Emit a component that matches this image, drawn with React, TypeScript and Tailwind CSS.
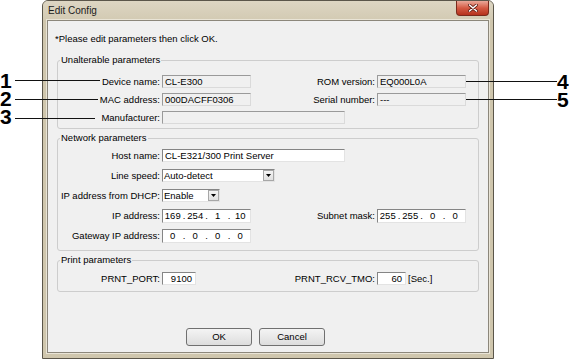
import React from 'react';

// sunken edit boxes: dark top/left, light bottom/right
const boxOff = 'border border-t-[#9a9a9a] border-l-[#9a9a9a] border-b-[#dadada] border-r-[#dadada] bg-[#f0f0f0]';
const boxOn  = 'border border-t-[#858585] border-l-[#858585] border-b-[#e3e3e3] border-r-[#e3e3e3] bg-white';

const Label: React.FC<{ children: React.ReactNode }> = ({ children }) => (
  <div className="text-right pr-[2px] whitespace-nowrap leading-[13px]">{children}</div>
);

const Field: React.FC<{ value?: string; w: string; off?: boolean; right?: boolean }> = ({ value = '', w, off, right }) => (
  <div
    className={`${w} h-[13px] ${off ? boxOff : boxOn} ${right ? 'text-right pr-[3px]' : 'pl-[2px]'} leading-[11px] whitespace-nowrap overflow-hidden`}
  >
    {value}
  </div>
);

const Select: React.FC<{ value: string; w: string }> = ({ value, w }) => (
  <div className={`${w} h-[13px] ${boxOn} flex items-stretch leading-[11px]`}>
    <span className="flex-1 pl-[1px] whitespace-nowrap overflow-hidden">{value}</span>
    <span className="w-[11px] border border-[#a7a7a7] bg-linear-to-b from-[#f4f4f4] to-[#e0e0e0] flex items-center justify-center">
      <svg width="5" height="3" viewBox="0 0 5 3">
        <path d="M0 0h5L2.5 3z" fill="#000" />
      </svg>
    </span>
  </div>
);

const IpField: React.FC<{ parts: string[] }> = ({ parts }) => (
  <div className={`w-[89px] h-[14px] ${boxOn} flex items-center leading-[12px]`}>
    {parts.map((p, i) => (
      <React.Fragment key={i}>
        {i > 0 && <span className="w-[3px] text-center">.</span>}
        <span className="flex-1 text-center">{p}</span>
      </React.Fragment>
    ))}
  </div>
);

const Group: React.FC<{ title: string; className: string; children: React.ReactNode }> = ({ title, className, children }) => (
  <fieldset className={`mx-[9px] border border-[#cdcdcd] rounded-[3px] ${className}`}>
    <legend className="ml-[2px] px-[1px] leading-[12px]">{title}</legend>
    {children}
  </fieldset>
);

const row = 'grid grid-cols-[104px_89px_126px_89px] items-center';

const Callout: React.FC<{ n: string; numX: string; top: string; lineY: string; lineX: string; lineW: string }> = ({
  n, numX, top, lineY, lineX, lineW,
}) => (
  <>
    <div className={`absolute ${numX} ${top} text-[21px] font-bold leading-[16px] text-black`}>{n}</div>
    <div className={`absolute ${lineX} ${lineY} ${lineW} h-px bg-[#111]`} />
  </>
);

export default function App() {
  return (
    <div className="relative w-[569px] h-[359px] bg-white overflow-hidden font-['Liberation_Sans',Arial,sans-serif] text-black">
      <div className="ml-[42px] w-[452px] h-[359px] flex flex-col border border-[#5b564a] rounded-t-[6px] bg-[#cfc6ad] px-[4px] pb-[5px]">
        {/* title bar */}
        <div className="h-[19px] flex justify-between bg-linear-to-b from-[#ddd6c3] to-[#d3cab3] -mx-[4px] px-[4px] rounded-t-[5px]">
          <div className="pl-[1px] flex items-center text-[10px] text-[#1b1b1b]">Edit Config</div>
          <div className="w-[33px] h-[15px] rounded-b-[4px] border border-t-0 border-[#7a2a1c] bg-linear-to-b from-[#e9a899] via-[#d45a43] to-[#b5301b] flex items-center justify-center">
            <svg width="10" height="8" viewBox="0 0 10 8">
              <path d="M1.5 1l7 6M8.5 1l-7 6" stroke="#5e1a10" strokeWidth="3" strokeLinecap="round" />
              <path d="M1.5 1l7 6M8.5 1l-7 6" stroke="#fff" strokeWidth="1.6" strokeLinecap="round" />
            </svg>
          </div>
        </div>

        {/* client area */}
        <div className="flex-1 flex flex-col bg-[#f0f0f0] border border-[#8c877b] shadow-[0_0_0_1px_#e9e4d6] text-[9.5px] leading-[12px]">
          <p className="mt-[12px] pl-[7px]">*Please edit parameters then click OK.</p>

          <Group title="Unalterable parameters" className="mt-[9px] pb-[4px]">
            <div className="mt-[9px] flex flex-col gap-[5px]">
              <div className={row}>
                <Label>Device name:</Label>
                <Field w="w-[89px]" off value="CL-E300" />
                <Label>ROM version:</Label>
                <Field w="w-[89px]" off value="EQ000L0A" />
              </div>
              <div className={row}>
                <Label>MAC address:</Label>
                <Field w="w-[89px]" off value="000DACFF0306" />
                <Label>Serial number:</Label>
                <Field w="w-[89px]" off value="---" />
              </div>
              <div className={row}>
                <Label>Manufacturer:</Label>
                <div className="col-span-3">
                  <Field w="w-[183px]" off />
                </div>
              </div>
            </div>
          </Group>

          <Group title="Network parameters" className="mt-[3px] pb-[7px]">
            <div className="mt-[5px] flex flex-col gap-[6px]">
              <div className={`${row} h-[14px] items-start`}>
                <Label>Host name:</Label>
                <div className="col-span-3">
                  <Field w="w-[183px]" value="CL-E321/300 Print Server" />
                </div>
              </div>
              <div className={`${row} h-[14px] items-start`}>
                <Label>Line speed:</Label>
                <div className="col-span-3">
                  <Select w="w-[113px]" value="Auto-detect" />
                </div>
              </div>
              <div className={`${row} h-[14px] items-start`}>
                <Label>IP address from DHCP:</Label>
                <Select w="w-[58px]" value="Enable" />
              </div>
              <div className={`${row} h-[14px] items-start`}>
                <Label>IP address:</Label>
                <IpField parts={['169', '254', '1', '10']} />
                <Label>Subnet mask:</Label>
                <IpField parts={['255', '255', '0', '0']} />
              </div>
              <div className={`${row} h-[14px] items-start`}>
                <Label>Gateway IP address:</Label>
                <IpField parts={['0', '0', '0', '0']} />
              </div>
            </div>
          </Group>

          <Group title="Print parameters" className="mt-[3px] pb-[6px]">
            <div className={`${row} mt-[6px]`}>
              <Label>PRNT_PORT:</Label>
              <Field w="w-[34px]" right value="9100" />
              <Label>PRNT_RCV_TMO:</Label>
              <div className="flex items-center">
                <Field w="w-[29px]" right value="60" />
                <span className="ml-[2px] whitespace-nowrap">[Sec.]</span>
              </div>
            </div>
          </Group>

          <div className="mt-[36px] pl-[138px] flex gap-[7px]">
            {['OK', 'Cancel'].map(t => (
              <button
                key={t}
                className="w-[66px] h-[18px] rounded-[3px] border border-[#707070] bg-linear-to-b from-[#f4f4f4] to-[#dddddd] leading-[16px] text-black"
              >
                {t}
              </button>
            ))}
          </div>
        </div>
      </div>

      {/* numbered callouts */}
      <Callout n="1" numX="left-0" top="top-[73px]" lineX="left-[15px]" lineY="top-[80px]" lineW="w-[85px]" />
      <Callout n="2" numX="left-0" top="top-[91px]" lineX="left-[15px]" lineY="top-[99px]" lineW="w-[83px]" />
      <Callout n="3" numX="left-0" top="top-[109px]" lineX="left-[15px]" lineY="top-[118px]" lineW="w-[80px]" />
      <Callout n="4" numX="left-[557px]" top="top-[74px]" lineX="left-[466px]" lineY="top-[81px]" lineW="w-[91px]" />
      <Callout n="5" numX="left-[557px]" top="top-[92px]" lineX="left-[466px]" lineY="top-[99px]" lineW="w-[91px]" />
    </div>
  );
}
